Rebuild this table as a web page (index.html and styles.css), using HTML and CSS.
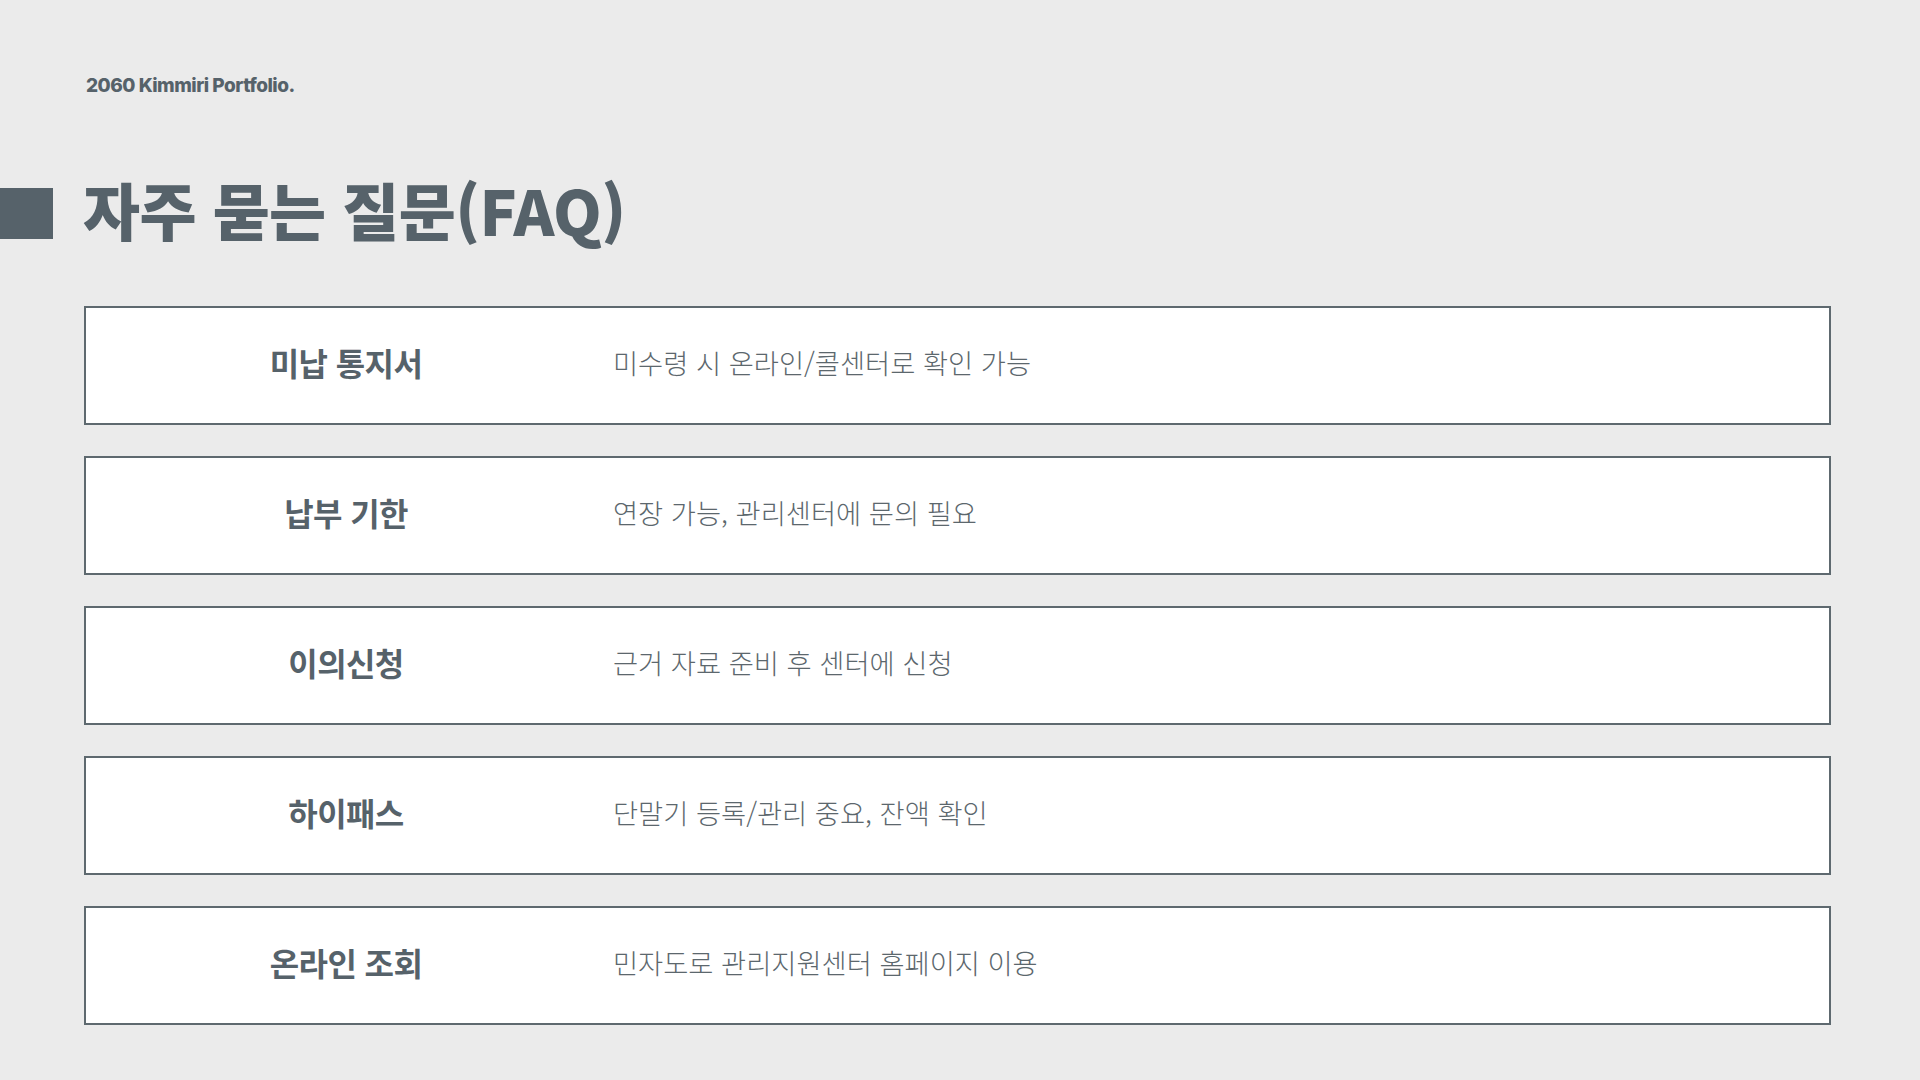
FILE: index.html
```html
<!DOCTYPE html>
<html lang="ko">
<head>
<meta charset="utf-8">
<title>자주 묻는 질문(FAQ)</title>
<link rel="stylesheet" href="styles.css">
</head>
<body>
<div class="page">
  <div class="brand">2060 Kimmiri Portfolio.</div>
  <div class="title-row">
    <span class="title-mark"></span>
    <h1 class="title">자주 묻는 질문(FAQ)</h1>
  </div>
  <div class="faq">
    <div class="item"><div class="q">미납 통지서</div><div class="a">미수령 시 온라인/콜센터로 확인 가능</div></div>
    <div class="item"><div class="q">납부 기한</div><div class="a">연장 가능, 관리센터에 문의 필요</div></div>
    <div class="item"><div class="q">이의신청</div><div class="a">근거 자료 준비 후 센터에 신청</div></div>
    <div class="item"><div class="q">하이패스</div><div class="a">단말기 등록/관리 중요, 잔액 확인</div></div>
    <div class="item"><div class="q">온라인 조회</div><div class="a">민자도로 관리지원센터 홈페이지 이용</div></div>
  </div>
</div>
</body>
</html>
```

FILE: styles.css
```css
html, body {
  margin: 0;
  padding: 0;
  background: #ebebeb;
}
body {
  width: 1920px;
  height: 1080px;
  overflow: hidden;
  color: #56626a;
  font-family: "Noto Sans CJK KR", "Noto Sans", sans-serif;
}
.page {
  padding-top: 75px;
}
.brand {
  margin-left: 86px;
  font-family: Inter, "Noto Sans CJK KR", sans-serif;
  font-weight: 800;
  font-size: 19px;
  line-height: 22px;
  letter-spacing: -0.5px;
  color: #56626a;
}
.title-row {
  display: flex;
  align-items: center;
  gap: 30px;
  margin-top: 81px;
  height: 62px;
}
.title-mark {
  width: 53px;
  height: 51px;
  background: #56626a;
  flex: none;
  margin-top: 8px;
}
.title {
  margin: 0;
  font-size: 62px;
  line-height: 62px;
  font-weight: 900;
  letter-spacing: -0.6px;
  color: #56626a;
}
.faq {
  margin: 66px 0 0 84px;
  width: 1747px;
  display: flex;
  flex-direction: column;
  gap: 31px;
}
.item {
  box-sizing: border-box;
  height: 119px;
  padding-bottom: 8px;
  background: #ffffff;
  border: 2px solid #5e696f;
  display: grid;
  grid-template-columns: 520px 1fr;
  align-items: center;
}
.q {
  text-align: center;
  font-size: 32px;
  font-weight: 700;
  letter-spacing: -0.6px;
  color: #56626a;
}
.a {
  padding-left: 7px;
  font-size: 27.3px;
  font-weight: 300;
  color: #5c676d;
}
```
